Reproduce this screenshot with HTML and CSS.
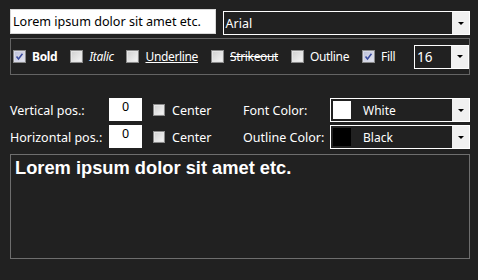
FILE: index.html
```html
<!DOCTYPE html>
<html lang="en">
<head>
    <meta charset="UTF-8">
    <title>Text Overlay Settings</title>
    <link rel="stylesheet" href="styles.css">
</head>
<body>

    <div class="panel">
        <!-- Text and font family -->
        <div class="top-row">
            <div class="text-box">Lorem ipsum dolor sit amet etc.</div>
            <div class="combo font-combo">
                <span class="combo-value">Arial</span>
                <span class="combo-btn"><span class="arrow"></span></span>
            </div>
        </div>

        <!-- Style options -->
        <div class="style-group">
            <label class="check"><span class="box checked"><svg viewBox="0 0 13 13"><path d="M3 6.5 L5.3 9.5 L10 3.2" /></svg></span><span class="bold">Bold</span></label>
            <label class="check"><span class="box"></span><span class="italic">Italic</span></label>
            <label class="check"><span class="box"></span><span class="underline">Underline</span></label>
            <label class="check"><span class="box"></span><span class="strike">Strikeout</span></label>
            <label class="check"><span class="box"></span><span>Outline</span></label>
            <label class="check"><span class="box checked"><svg viewBox="0 0 13 13"><path d="M3 6.5 L5.3 9.5 L10 3.2" /></svg></span><span>Fill</span></label>
            <div class="combo size-combo">
                <span class="combo-value">16</span>
                <span class="combo-btn"><span class="arrow"></span></span>
            </div>
        </div>

        <!-- Position and colours -->
        <div class="pos-grid">
            <span class="field-label">Vertical pos.:</span>
            <div class="num-box">0</div>
            <label class="check center-check"><span class="box small"></span><span>Center</span></label>
            <span class="field-label">Font Color:</span>
            <div class="combo color-combo">
                <span class="swatch white"></span>
                <span class="combo-value">White</span>
                <span class="combo-btn"><span class="arrow"></span></span>
            </div>

            <span class="field-label">Horizontal pos.:</span>
            <div class="num-box">0</div>
            <label class="check center-check"><span class="box small"></span><span>Center</span></label>
            <span class="field-label">Outline Color:</span>
            <div class="combo color-combo">
                <span class="swatch black"></span>
                <span class="combo-value">Black</span>
                <span class="combo-btn"><span class="arrow"></span></span>
            </div>
        </div>

        <!-- Preview -->
        <div class="preview">Lorem ipsum dolor sit amet etc.</div>
    </div>

</body>
</html>
```

FILE: styles.css
```css
body {
    margin: 0;
    background-color: #212121;
    font-family: "Noto Sans", "Open Sans", sans-serif;
    font-size: 12px;
    color: #fff;
}
.panel {
    width: 460px;
    padding: 9px 10px 0 10px;
}
.top-row {
    display: flex;
    align-items: flex-start;
    height: 29px;
}
.text-box {
    width: 202px;
    height: 23px;
    line-height: 23px;
    padding-left: 2px;
    background-color: #fff;
    border: 1px solid #d8d8d8;
    color: #000;
    font-size: 12.6px;
}
.combo {
    display: flex;
    align-items: center;
    box-sizing: border-box;
    border: 1px solid #fff;
    background-color: #212121;
    color: #fff;
}
.combo-value {
    flex: 1;
    padding-left: 2px;
    font-size: 12.5px;
}
.combo-btn {
    width: 17px;
    align-self: stretch;
    background-color: #f0f0f0;
    display: flex;
    align-items: center;
    justify-content: center;
}
.arrow {
    width: 0;
    height: 0;
    border-left: 3px solid transparent;
    border-right: 3px solid transparent;
    border-top: 3px solid #000;
}
.font-combo {
    width: 248px;
    height: 24px;
    margin: 2px 0 0 7px;
}
.style-group {
    display: flex;
    align-items: center;
    height: 35px;
    border: 1px solid #646464;
    padding-left: 2px;
    font-size: 12px;
}
.style-group .check span:last-child {
    letter-spacing: -0.35px;
}
.check {
    display: flex;
    align-items: center;
    gap: 6px;
    margin-right: 13px;
}
.box {
    width: 11px;
    height: 11px;
    border: 1px solid #8a8a8a;
    background: linear-gradient(135deg, #cfcfcf, #f7f7f7);
    box-shadow: inset 0 0 0 1px #e6e6e6;
}
.box.checked {
    background: linear-gradient(135deg, #b9bdd6, #e8e9f2);
    box-shadow: inset 0 0 0 1px #d8dae8;
}
.box svg {
    display: block;
    width: 11px;
    height: 11px;
}
.box path {
    fill: none;
    stroke: #3a4c9e;
    stroke-width: 1.8;
}
.box.small {
    width: 10px;
    height: 10px;
}
.bold { font-weight: bold; }
.italic { font-style: italic; }
.underline { text-decoration: underline; }
.strike { text-decoration: line-through; }
.size-combo {
    width: 55px;
    height: 24px;
    margin-left: auto;
}
.size-combo .combo-value {
    font-size: 13.5px;
}
.pos-grid {
    display: grid;
    grid-template-columns: 99px 33px 101px 87px 140px;
    grid-template-rows: 24px 24px;
    row-gap: 3px;
    margin-top: 23px;
    align-items: center;
    font-size: 12.5px;
}
.num-box {
    height: 23px;
    align-self: start;
    background-color: #fff;
    color: #000;
    text-align: center;
    line-height: 18px;
}
.center-check {
    margin-left: 11px;
    gap: 7px;
}
.color-combo {
    height: 24px;
    padding-left: 2px;
}
.color-combo .combo-value {
    padding-left: 12px;
    font-size: 12px;
}
.swatch {
    width: 18px;
    height: 18px;
}
.swatch.white { background-color: #fff; }
.swatch.black { background-color: #000; }
.preview {
    margin-top: 5px;
    height: 99px;
    border: 1px solid #6e6e6e;
    padding: 2px 4px;
    font-family: "Liberation Sans", Arial, sans-serif;
    font-weight: bold;
    font-size: 18.3px;
    line-height: 22px;
}
```
